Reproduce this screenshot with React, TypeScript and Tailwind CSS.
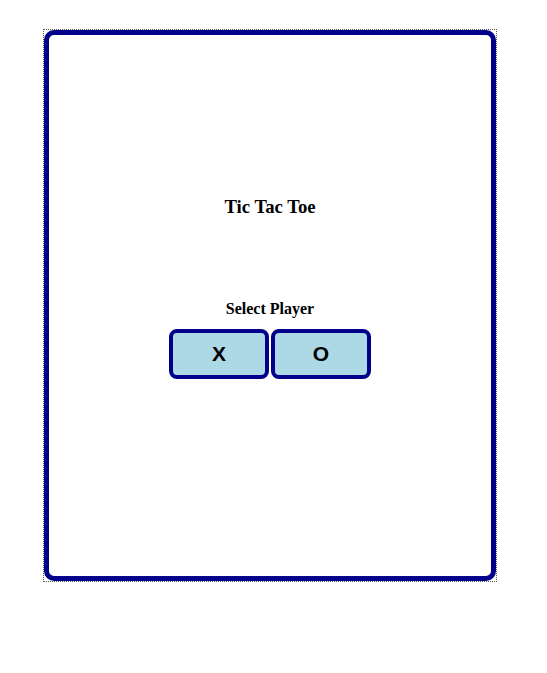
import React, { useState } from 'react';

export default function App() {
  const [player, setPlayer] = useState<string | null>(null);

  return (
    <div className="w-full min-h-[673px] bg-white">
      {/* Dotted focus frame around the board */}
      <div className="ml-[43px] mt-[29px] w-[454px] border border-dotted border-[#555]">
        <div className="w-[452px] h-[551px] border-[5px] border-[#00008b] rounded-[10px] flex flex-col items-center pt-[161px]">
          <h3
            className="text-[18.72px] leading-[22px] font-bold text-black"
            style={{ fontFamily: '"Liberation Serif", serif' }}
          >
            Tic Tac Toe
          </h3>

          <p
            className="mt-[82px] text-[16px] leading-[18px] font-bold text-black"
            style={{ fontFamily: '"Liberation Serif", serif' }}
          >
            Select Player
          </p>

          <div className="mt-[11px] flex gap-[2px]">
            {['X', 'O'].map((p) => (
              <button
                key={p}
                onClick={() => setPlayer(p)}
                className="w-[100px] h-[50px] bg-[#add8e6] border-4 border-[#00008b] rounded-[8px] text-[21px] font-bold text-black flex items-center justify-center"
                style={{ fontFamily: '"Liberation Sans", Arial, sans-serif' }}
              >
                {p}
              </button>
            ))}
          </div>
          {player && <span className="sr-only">{player}</span>}
        </div>
      </div>
    </div>
  );
}
